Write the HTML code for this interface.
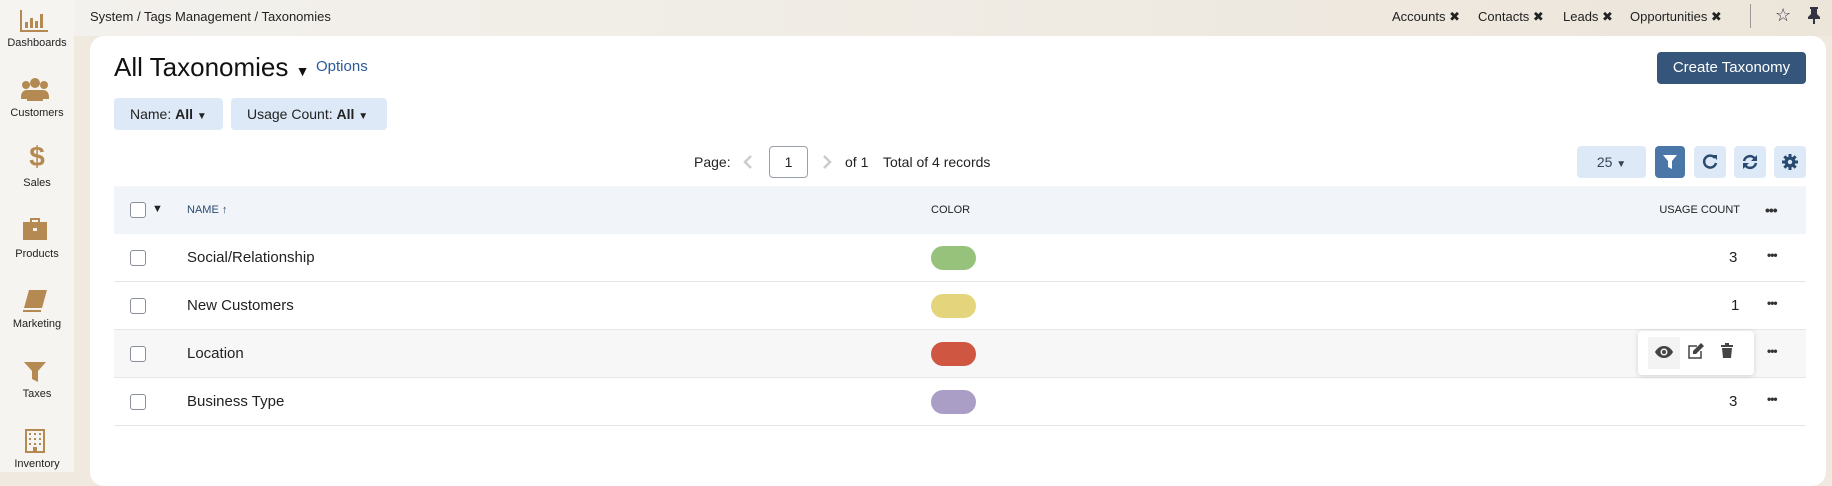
<!DOCTYPE html>
<html><head><meta charset="utf-8"><style>
*{box-sizing:border-box;margin:0;padding:0}
body{width:1832px;height:472px;overflow:hidden;background:#efe9e0;font-family:"Liberation Sans",sans-serif;color:#222;position:relative}
.a{position:absolute;white-space:nowrap}
#side{left:0;top:0;width:74px;height:472px;background:#f6f4f0}
.nav{position:absolute;left:0;width:74px;text-align:center;font-size:11px;color:#222}
.ic{fill:#b48a52}
#top{left:74px;top:0;width:1758px;height:36px;background:linear-gradient(90deg,#f3f1ed,#ece5da)}
#card{left:90px;top:36px;width:1736px;height:450px;background:#fff;border-radius:14px}
.t{font-size:13px;color:#222}
.fb{background:#dde9f7;border-radius:4px;height:32px;font-size:14px;line-height:32px;color:#222}
.tb{background:#dde9f7;border-radius:4px;height:32px;width:32px;top:146px}
.row{left:114px;width:1692px;height:48px;border-bottom:1px solid #e6e6e6}
.cb{width:16px;height:16px;border:1px solid #8a8f98;border-radius:3px;background:#fff}
.nm{font-size:15px;color:#222}
.pill{left:931px;width:45px;height:24px;border-radius:12px}
.dots{font-size:14px;font-weight:bold;letter-spacing:-1px;color:#333}
</style></head><body>
<div id="side" class="a">
<svg class="a" style="left:20px;top:10px" width="28" height="22" viewBox="0 0 28 22"><path class="ic" d="M0 0h2v20h26v2H0z M5 12h3v6H5z M10 8h3v10h-3z M15 11h3v7h-3z M20 4h3v14h-3z"/></svg>
<div class="nav" style="top:37px">Dashboards</div>
<svg class="a" style="left:21px;top:77px" width="28" height="26" viewBox="0 0 28 26"><g class="ic"><circle cx="14" cy="6" r="5"/><circle cx="5" cy="8" r="4"/><circle cx="23" cy="8" r="4"/><path d="M0 20c0-5 3-7 6-7h16c3 0 6 2 6 7v2H0z M6 24c0-6 3-9 8-9s8 3 8 9z"/></g></svg>
<div class="nav" style="top:107px">Customers</div>
<div class="nav" style="top:143px;font-size:28px;font-weight:bold;color:#b48a52;line-height:28px">$</div>
<div class="nav" style="top:177px">Sales</div>
<svg class="a" style="left:22px;top:218px" width="26" height="22" viewBox="0 0 26 22"><path class="ic" d="M8 0h10v4h7v18H1V4h7z M10 2v2h6V2z"/><rect x="11" y="10" width="4" height="3" fill="#f6f4f0"/></svg>
<div class="nav" style="top:248px">Products</div>
<svg class="a" style="left:23px;top:290px" width="24" height="22" viewBox="0 0 24 22"><path class="ic" d="M6 0h18l-5 18H1z M0 20h18v2H0z"/></svg>
<div class="nav" style="top:318px">Marketing</div>
<svg class="a" style="left:24px;top:362px" width="22" height="20" viewBox="0 0 22 20"><path class="ic" d="M0 0h22l-8 9v11l-6-3V9z"/></svg>
<div class="nav" style="top:388px">Taxes</div>
<svg class="a" style="left:25px;top:429px" width="20" height="24" viewBox="0 0 20 24"><rect x="0" y="0" width="20" height="24" class="ic"/><rect x="2" y="2" width="16" height="20" fill="#f6f4f0"/><g class="ic"><rect x="4" y="4" width="2" height="2"/><rect x="9" y="4" width="2" height="2"/><rect x="14" y="4" width="2" height="2"/><rect x="4" y="9" width="2" height="2"/><rect x="9" y="9" width="2" height="2"/><rect x="14" y="9" width="2" height="2"/><rect x="4" y="14" width="2" height="2"/><rect x="9" y="14" width="2" height="2"/><rect x="14" y="14" width="2" height="2"/><rect x="8" y="18" width="4" height="4"/></g></svg>
<div class="nav" style="top:458px">Inventory</div>
</div>
<div id="top" class="a"></div>
<div class="a t" style="left:90px;top:9px">System / Tags Management / Taxonomies</div>
<div class="a t" style="left:1392px;top:9px">Accounts ✖</div>
<div class="a t" style="left:1478px;top:9px">Contacts ✖</div>
<div class="a t" style="left:1563px;top:9px">Leads ✖</div>
<div class="a t" style="left:1630px;top:9px">Opportunities ✖</div>
<div class="a" style="left:1750px;top:4px;width:1px;height:24px;background:#999"></div>
<div class="a" style="left:1775px;top:5px;font-size:18px;color:#334">☆</div>
<svg class="a" style="left:1808px;top:7px" width="12" height="17" viewBox="0 0 12 17"><path fill="#334" d="M2 0h8v2H9v5l3 3v2H7v5H5v-5H0v-2l3-3V2H2z"/></svg>
<div id="card" class="a"></div>
<div class="a" style="left:114px;top:52px;font-size:26px;color:#111">All Taxonomies <span style="font-size:14px">▼</span></div>
<div class="a" style="left:316px;top:58px;font-size:15px;color:#2a5a9a">Options</div>
<div class="a" style="left:1657px;top:52px;width:149px;height:32px;background:#35557a;border-radius:4px;color:#fff;font-size:15px;text-align:center;line-height:32px">Create Taxonomy</div>
<div class="a fb" style="left:114px;top:98px;width:109px;padding-left:16px">Name: <b>All</b> <span style="font-size:10px">▼</span></div>
<div class="a fb" style="left:231px;top:98px;width:156px;padding-left:16px">Usage Count: <b>All</b> <span style="font-size:10px">▼</span></div>
<div class="a" style="left:694px;top:154px;font-size:14px">Page:</div>
<svg class="a" style="left:743px;top:155px" width="10" height="14" viewBox="0 0 10 14"><path d="M8 1L2 7l6 6" fill="none" stroke="#ccc" stroke-width="2.5"/></svg>
<div class="a" style="left:769px;top:146px;width:39px;height:32px;border:1px solid #9aa0aa;border-radius:4px;text-align:center;line-height:30px;font-size:14px">1</div>
<svg class="a" style="left:822px;top:155px" width="10" height="14" viewBox="0 0 10 14"><path d="M2 1l6 6-6 6" fill="none" stroke="#ccc" stroke-width="2.5"/></svg>
<div class="a" style="left:845px;top:154px;font-size:14px">of 1</div>
<div class="a" style="left:883px;top:154px;font-size:14px">Total of 4 records</div>
<div class="a fb" style="left:1577px;top:146px;width:69px;text-align:center;color:#345">25 <span style="font-size:10px">▼</span></div>
<div class="a tb" style="left:1655px;width:30px;background:#4a77a8"><svg style="margin:9px 8px" width="14" height="14" viewBox="0 0 14 14"><path fill="#fff" d="M0 0h14L9 6v8L5 12V6z"/></svg></div>
<div class="a tb" style="left:1694px"><svg style="margin:8px" width="16" height="16" viewBox="0 0 16 16"><path fill="none" stroke="#2a4a6f" stroke-width="2.5" d="M13 4A6 6 0 1 0 14 9"/><path fill="#2a4a6f" d="M10 1h5v5z"/></svg></div>
<div class="a tb" style="left:1734px"><svg style="margin:8px" width="16" height="16" viewBox="0 0 16 16"><path fill="none" stroke="#2a4a6f" stroke-width="2.5" d="M2 7a6 6 0 0 1 11-2M14 9a6 6 0 0 1-11 2"/><path fill="#2a4a6f" d="M15 1v6H9z M1 15V9h6z"/></svg></div>
<div class="a tb" style="left:1774px"><svg style="margin:8px" width="16" height="16" viewBox="0 0 16 16"><g fill="#2a4a6f"><circle cx="8" cy="8" r="5.5"/><rect x="6.5" y="0" width="3" height="16"/><rect x="0" y="6.5" width="16" height="3"/><rect x="6.5" y="0" width="3" height="16" transform="rotate(45 8 8)"/><rect x="6.5" y="0" width="3" height="16" transform="rotate(-45 8 8)"/></g><circle cx="8" cy="8" r="2.2" fill="#dde9f7"/></svg></div>
<div class="a" style="left:114px;top:186px;width:1692px;height:48px;background:#f1f4f9"></div>
<div class="a cb" style="left:130px;top:202px"></div>
<div class="a" style="left:152px;top:203px;font-size:11px">▼</div>
<div class="a" style="left:187px;top:204px;font-size:11px;color:#2a4a6f">NAME <b>↑</b></div>
<div class="a" style="left:931px;top:204px;font-size:11px">COLOR</div>
<div class="a" style="left:1640px;top:204px;font-size:11px;width:100px;text-align:right">USAGE COUNT</div>
<div class="a dots" style="left:1765px;top:202px">•••</div>

<div class="a row" style="top:234px"></div>
<div class="a row" style="top:282px"></div>
<div class="a row" style="top:330px;background:#f7f7f7"></div>
<div class="a row" style="top:378px"></div>
<div class="a cb" style="left:130px;top:250px"></div>
<div class="a cb" style="left:130px;top:298px"></div>
<div class="a cb" style="left:130px;top:346px"></div>
<div class="a cb" style="left:130px;top:394px"></div>
<div class="a nm" style="left:187px;top:249px">Social/Relationship</div>
<div class="a nm" style="left:187px;top:297px">New Customers</div>
<div class="a nm" style="left:187px;top:345px">Location</div>
<div class="a nm" style="left:187px;top:393px">Business Type</div>
<div class="a pill" style="top:246px;background:#97c27b"></div>
<div class="a pill" style="top:294px;background:#e4d47b"></div>
<div class="a pill" style="top:342px;background:#cf5641"></div>
<div class="a pill" style="top:390px;background:#ab9ec6"></div>
<div class="a nm" style="left:1729px;top:249px">3</div>
<div class="a nm" style="left:1731px;top:297px">1</div>
<div class="a nm" style="left:1729px;top:393px">3</div>
<div class="a dots" style="left:1767px;top:248px;font-size:12px">•••</div>
<div class="a dots" style="left:1767px;top:296px;font-size:12px">•••</div>
<div class="a dots" style="left:1767px;top:344px;font-size:12px">•••</div>
<div class="a dots" style="left:1767px;top:392px;font-size:12px">•••</div>
<div class="a" style="left:1638px;top:331px;width:116px;height:44px;background:#fff;border-radius:4px;box-shadow:0 1px 6px rgba(0,0,0,.15)"></div>
<div class="a" style="left:1648px;top:337px;width:32px;height:32px;background:#f3f3f3"></div>
<svg class="a" style="left:1655px;top:346px" width="18" height="12" viewBox="0 0 18 12"><path fill="#444" d="M9 0C4 0 1 4 0 6c1 2 4 6 9 6s8-4 9-6c-1-2-4-6-9-6z"/><circle cx="9" cy="6" r="3.5" fill="#f3f3f3"/><circle cx="9" cy="6" r="2" fill="#444"/></svg>
<svg class="a" style="left:1688px;top:343px" width="16" height="16" viewBox="0 0 16 16"><path fill="none" stroke="#444" stroke-width="1.5" d="M9 3H1v12h12V8"/><path fill="#444" d="M13 0l3 3-8 8H5V8z"/></svg>
<svg class="a" style="left:1721px;top:343px" width="12" height="15" viewBox="0 0 12 15"><path fill="#444" d="M0 2h12v2H0z M4 0h4v2H4z M1 5h10l-1 10H2z"/></svg>
</body></html>
